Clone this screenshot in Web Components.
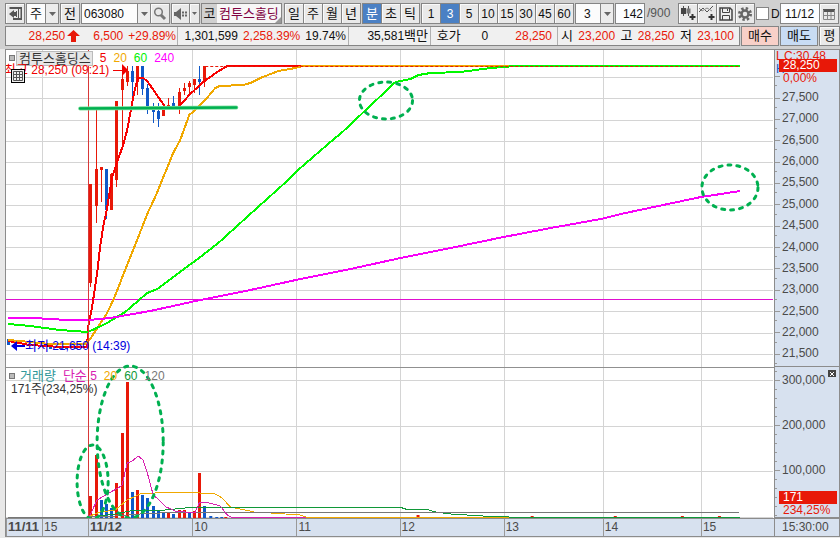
<!DOCTYPE html>
<html lang="ko">
<head>
<meta charset="utf-8">
<title>컴투스홀딩스 063080</title>
<style>
html,body{margin:0;height:100%}
body{font:12px/16px "Liberation Sans","Noto Sans CJK KR",sans-serif;color:#111;background:#e8e8e8}
</style>
</head>
<body>
<hts-window></hts-window>
<script>
const define=(name,html,setup)=>{
  const t=document.createElement('template');t.innerHTML=html;
  customElements.define(name,class extends HTMLElement{
    constructor(){super();this.attachShadow({mode:'open'}).append(t.content.cloneNode(true))}
    connectedCallback(){if(setup)setup(this,this.shadowRoot)}
  });
};
const hangul=/[가-힣]/;

define('hts-button',`<style>
:host{display:flex;width:20px;flex:none}
button{flex:1;min-width:0;padding:0;margin:0;border:0;background:#e9e9e9;font:inherit;color:inherit;display:flex;align-items:center;justify-content:center;box-shadow:inset 1px 1px #fafafa}
:host([active]) button{background:#4a80c4;color:#fff;box-shadow:none}
</style><button type="button"><slot></slot></button>`,(h,r)=>{
  const b=r.querySelector('button');
  if(h.getAttribute('label'))b.setAttribute('aria-label',h.getAttribute('label'));
  if(hangul.test(h.textContent))b.style.fontSize='13px';
});

define('hts-group',`<style>
:host{display:flex;flex:none;box-sizing:border-box;height:21px;border:1px solid #858585;background:#858585;gap:1px}
</style><slot></slot>`);

define('hts-select',`<style>
:host{display:grid;grid-template-columns:1fr 13px;gap:1px;flex:none;background:#858585;position:relative}
select{grid-column:1/3;grid-row:1;appearance:none;border:0;margin:0;padding:0 0 0 4px;background:#fcfcfc;font:inherit;color:#111;border-radius:0;min-width:0}
span{grid-column:2;grid-row:1;z-index:1;background:#ececec;border-left:1px solid #858585;pointer-events:none;display:flex;align-items:center;justify-content:center}
</style><select></select><span><svg width="7" height="4"><path d="M0 0H7L3.500 4Z" fill="#666"/></svg></span>`,(h,r)=>{
  const s=r.querySelector('select');s.setAttribute('aria-label',h.getAttribute('label'));
  s.add(new Option(h.getAttribute('value')));
  s.style.paddingLeft=h.getAttribute('pad')+'px';
  if(hangul.test(h.getAttribute('value')))s.style.fontSize='13px';
});

define('hts-input',`<style>
:host{display:flex;flex:none}
input{flex:1;width:0;min-width:0;border:0;margin:0;padding:0 2px 0 4px;background:#fcfdff;font:inherit;color:#111;border-radius:0;outline:0}
:host([end]) input{text-align:right;padding-right:1px}
</style><input type="text">`,(h,r)=>{
  const i=r.querySelector('input');i.value=h.getAttribute('value');i.setAttribute('aria-label',h.getAttribute('label'));
});

define('hts-toolbar',`<style>
:host{display:flex;align-items:center;padding:3px 1px 2px 5px;gap:1px;background:#d0d0d0}
.w18{width:18px}
.name{display:flex;background:#f7f7f7;width:79px;overflow:hidden;position:relative;color:#800040;white-space:nowrap;font-size:13px}
.name b{font-weight:400;background:#d0d0d0;color:#111;width:15px;text-align:center;line-height:19px;margin-right:2px}
.name span{line-height:19px}
.name i{position:absolute;right:0;bottom:0;border:3px solid;border-color:transparent #999 #999 transparent}
.total{color:#555;line-height:21px;width:32px;padding-left:1px}
label{display:flex;align-items:center;gap:2px;width:22px;margin-right:1px}
input{appearance:none;width:13px;height:13px;border:1px solid #858585;background:#fff;margin:0;flex:none}
</style>
<hts-group><hts-button class="w18" label="화면 이동"><svg width="13" height="13"><path d="M.5 1H12.500V12H4" stroke="#555" stroke-width="2" fill="none"/><path d="M9.500 2V12" stroke="#555"/><path d="M0 7L5 3V11ZM4 5H7V9H4ZM7 4H8V10H7Z" fill="#555"/></svg></hts-button></hts-group>
<hts-group><hts-select label="종류" value="주" pad="3" style="width:31px"></hts-select></hts-group>
<hts-group><hts-button class="w18">전</hts-button></hts-group>
<hts-group><hts-select label="종목코드" value="063080" pad="2" style="width:68px"></hts-select><hts-button class="w18" label="종목 검색"><svg width="14" height="14"><circle cx="5.500" cy="5" r="3.800" fill="none" stroke="#777" stroke-width="1.500"/><path d="M8 8L12 12" stroke="#777" stroke-width="3"/></svg></hts-button></hts-group>
<hts-group><hts-button style="width:17px" label="소리"><svg width="13" height="12"><path d="M0 4H2L7 0V12L2 8H0Z" fill="#666"/><path d="M8 4.500H10M11 4.500H13M8 7.500H10M11 7.500H13" stroke="#666" stroke-width="2"/></svg></hts-button><hts-button style="width:9px" label="소리 메뉴"><svg width="5" height="3"><path d="M0 0H5L2.500 3Z" fill="#666"/></svg></hts-button></hts-group>
<hts-group><div class="name"><b>코</b><span>컴투스홀딩</span><i></i></div></hts-group>
<hts-group style="margin-left:1px"><hts-button class="w18">일</hts-button><hts-button class="w18">주</hts-button><hts-button class="w18">월</hts-button><hts-button class="w18">년</hts-button></hts-group>
<hts-group><hts-button class="w18" active>분</hts-button><hts-button class="w18">초</hts-button><hts-button class="w18">틱</hts-button></hts-group>
<hts-group class="minutes"></hts-group>
<hts-group><hts-select label="분 단위" value="3" pad="8" style="width:37px"></hts-select></hts-group>
<hts-group><hts-input end label="봉 개수" value="142" style="width:28px"></hts-input></hts-group>
<span class="total">/900</span>
<hts-group><hts-button class="w18" label="봉 추가"><svg width="16" height="15"><path d="M3.500 0V10M8.500 0V10" stroke="#555"/><path d="M1 2H6V8H1Z" fill="#444"/><path d="M6.500 2.500H10.500V7.500H6.500Z" fill="#777"/><path d="M12.500 8V14M9.500 11H15.500" stroke="#333" stroke-width="2"/></svg></hts-button><hts-button class="w18" label="지표 추가"><svg width="16" height="15"><path d="M0 6L4 2L8 6L14 0" fill="none" stroke="#555"/><path d="M0 2L3 5L8 2L13 5" fill="none" stroke="#888"/><path d="M12.500 8V14M9.500 11H15.500" stroke="#333" stroke-width="2"/></svg></hts-button><hts-button class="w18" label="저장"><svg width="14" height="14"><path d="M1 1H11L13 3V13H1Z" fill="#eee" stroke="#444" stroke-width="1.500"/><path d="M3.500 1V5.500H10.500V1M3.500 13V8.500H10.500V13M8.500 2V4" fill="none" stroke="#444"/></svg></hts-button><hts-button class="w18" label="설정"><svg width="14" height="14"><circle cx="7" cy="7" r="5.500" fill="none" stroke="#666" stroke-width="3" stroke-dasharray="2.300 2.020"/><circle cx="7" cy="7" r="3.500" fill="none" stroke="#666" stroke-width="2.500"/></svg></hts-button></hts-group>
<label><input type="checkbox">D</label>
<hts-group><hts-input label="날짜" value="11/12" style="width:38px"></hts-input><hts-button class="w18" label="달력"><svg width="12" height="12"><path d="M0 1H12V4H0Z" fill="#555"/><path d="M.5 2V11.500H11.500V2M.5 7.500H11.500M4.500 4V11M8 4V11" fill="none" stroke="#888"/></svg></hts-button></hts-group>`,(h,r)=>{
  const g=r.querySelector('.minutes');
  for(const m of [1,3,5,10,15,30,45,60]){const b=document.createElement('hts-button');b.style.width='18px';b.textContent=m;if(m===3)b.setAttribute('active','');g.append(b)}
});

define('hts-quotes',`<style>
:host{display:flex;gap:1px;padding:0 0 3px 5px;background:#d0d0d0;height:20px}
dl{margin:0;flex:1;display:flex;border:1px solid #858585;background:#f0f0f0;line-height:18px;white-space:nowrap}
dl>div{display:flex;justify-content:flex-end;box-sizing:border-box;border-right:1px solid #b0b0b0;padding-right:2px;gap:5px}
dl>div:last-child{border:0;flex:1;justify-content:space-between;padding:0 5px 0 3px;gap:4px}
dt,dd{margin:0}.r{color:#e81808}
dt,.k{font-size:13px}
svg{align-self:center;margin:0 8px 0 -3px}
hts-group{height:20px}
</style>
<dl>
<div style="width:172px;padding-right:1px"><dd class="r">28,250</dd><svg width="13" height="12"><path d="M6.500 0L13 6H9V12H4V6H0Z" fill="#e81808"/></svg><dd class="r">6,500</dd><dd class="r">+29.89%</dd></div>
<div style="width:171px"><dd>1,301,599</dd><dd class="r">2,258.39%</dd><dd>19.74%</dd></div>
<div style="width:82px"><dd>35,581<span class="k">백만</span></dd></div>
<div style="width:127px;padding-right:5px"><dt>호가</dt><dd style="margin-left:16px">0</dd><dd class="r" style="margin-left:22px">28,250</dd></div>
<div><dt>시</dt><dd class="r">23,200</dd><dt>고</dt><dd class="r">28,250</dd><dt>저</dt><dd class="r">23,100</dd></div>
</dl>
<hts-group><hts-button id="buy" style="width:36px">매수</hts-button></hts-group><hts-group><hts-button id="sell" style="width:36px">매도</hts-button></hts-group><hts-group><hts-button style="width:19px">평</hts-button></hts-group>
`,(h,r)=>{
  for(const [id,c] of [['buy','#f8d0c8'],['sell','#c8dcf4']]){
    const b=r.getElementById(id).shadowRoot.querySelector('button');b.style.background=c;b.style.boxShadow='none';
  }
});

define('price-axis',`<style>
:host{display:flex;flex-direction:column;padding:15px 0 2px;background:#d7e1ef;border-left:1px solid #8c8c8c;border-right:1px solid #8c8c8c;border-bottom:1px solid #8c8c8c;color:#4a4a4a;position:relative;overflow:hidden}
.t{flex:1;display:grid;grid-template-columns:5px 1fr;align-items:center;gap:2px;background:linear-gradient(#999,#999) 0 100%/2px 1px no-repeat}
.t::before{content:"";height:1px;width:5px;background:#999;margin-top:2px}
.m{position:absolute;left:1px;color:#e81808;line-height:12px;white-space:nowrap}
.tag{left:4px;right:2px;background:#e81808;color:#fff;padding-left:4px}
</style><div class="m" style="top:0">L</div><div class="m" style="top:0;left:9px">C:30.48</div><div class="m" style="top:13px;color:#1058c8">H</div><div class="m" style="top:22px;left:8px">0,00%</div><div class="m tag" style="top:9px;line-height:13px">28,250</div>`,(h,r)=>{
  for(let v=28000;v>=21500;v-=500){const d=document.createElement('div');d.className='t';d.textContent=v===28000?'':v.toLocaleString('en-US');r.append(d)}
});

define('volume-axis',`<style>
:host{display:flex;flex-direction:column;justify-content:space-between;padding:5px 0 39px;background:repeating-linear-gradient(#999 0 1px,transparent 1px 9px) 0 4px/2px 100% no-repeat #d7e1ef;border-left:1px solid #8c8c8c;border-right:1px solid #8c8c8c;border-bottom:1px solid #8c8c8c;color:#4a4a4a;position:relative}
.t{display:grid;grid-template-columns:5px 1fr;align-items:center;gap:2px}
.t::before{content:"";width:5px;height:1px;background:#999;margin-top:1px}
button{position:absolute;right:3px;top:3px;width:8px;height:7px;padding:0;border:0;background:#444;display:flex;align-items:center;justify-content:center}
.foot{position:absolute;left:4px;right:2px;bottom:0;line-height:13px;color:#e81808}
.foot div{padding-left:4px}.foot div:first-child{background:#e81808;color:#fff}
</style><div class="t">300,000</div><div class="t">200,000</div><div class="t">100,000</div><div class="foot"><div>171</div><div>234,25%</div></div><button type="button" aria-label="닫기"><svg width="4" height="4"><path d="M0 0L4 4M4 0L0 4" stroke="#fff"/></svg></button>`);

define('time-axis',`<style>
:host{display:grid;grid-template-columns:36fr 46fr 104fr 104fr 103fr 104fr 99fr 98fr 73fr;background:#d7e1ef;border:1px solid #8c8c8c;border-width:1px 0;color:#4a4a4a}
span{border-left:1px solid #999;padding-left:1px;white-space:nowrap}
span:first-child{border:0}
b{font-size:13px}
</style><span><b>11/11</b></span><span>15</span><span><b>11/12</b></span><span>10</span><span>11</span><span>12</span><span>13</span><span>14</span><span>15</span>`);

define('chart-plot',`<style>
:host{display:block;position:relative;background:#fff;overflow:hidden;min-height:0}
svg.p{position:absolute;inset:0;width:100%;height:100%}
svg.p *{vector-effect:non-scaling-stroke}
.o{position:absolute;white-space:nowrap;display:flex;align-items:center}
.k{font-size:13px}
.sq{width:4px;height:4px;border:1px solid #777;background:#bbb;flex:none}
.chip{background:#e6e6e6;border:1px solid #bbb;font-size:13px;line-height:13px;padding:0 1px 0 2px;margin:0 7px 0 1px;color:#333}
.lg{display:flex;gap:7px}
.grid{left:5px;top:19px;width:12px;height:12px;border:1px solid #000;background:#eee;justify-content:center}
</style>
<svg class="p" viewBox="6 50 767 468" preserveAspectRatio="none" fill="none"></svg>
<div class="o" style="left:3px;top:0"><span class="sq"></span><span class="chip">컴투스홀딩스</span><span class="lg"><span style="color:#f00000">5</span><span style="color:#f0a800">20</span><span style="color:#00f000">60</span><span style="color:#f0f">240</span></span></div>
<div class="o" style="left:-2px;top:12px;color:#f00000"><span><span class="k">최고</span>&nbsp;28,250&nbsp;(09:21)</span><svg width="16" height="12" style="margin-left:4px"><path d="M0 6.500H10" stroke="#f00000"/><path d="M9 0L15 6L9 12Z" fill="#f00000"/></svg></div>
<div class="o grid"><svg width="10" height="10"><path d="M.5 .5H9.500V9.500H.5ZM3.500 0V10M6.500 0V10M0 3.500H10M0 6.500H10" stroke="#555" fill="none"/></svg></div>
<div class="o" style="left:5px;top:61.500%;color:#0000e0"><svg width="14" height="12"><path d="M0 6L6 1V11Z" fill="#0000e0"/><path d="M5 6H14" stroke="#0000e0" stroke-width="2"/></svg><span><span class="k">최저</span>&nbsp;21,650&nbsp;(14:39)</span></div>
<div class="o" style="left:3px;top:68%;gap:7px"><span class="sq" style="margin-right:-2px"></span><span class="k" style="color:#30989a">거래량</span><span style="color:#d820b0"><span class="k">단순</span>&nbsp;5</span><span style="color:#f0a800">20</span><span style="color:#109838">60</span><span style="color:#777">120</span></div>
<div class="o" style="left:5px;top:70.700%;color:#333">171주(234,25%)</div>`,(h,r)=>{
  const R='#e81808',B='#1058c8';let s='';
  const line=(pts,c,w)=>s+=`<polyline points="${pts}" stroke="${c}" stroke-width="${w}" shape-rendering="crispEdges"/>`;
  for(const y of [77.5,98.5,120.5,141.5,162.5,184.5,205.5,226.5,247.5,269.5,290.5,311.5,333.5,354.5,380.5,426.5,471.5,517.5])line(`6,${y} 772,${y}`,'#d4d4d4',1);
  for(const x of [42.5,192.5,296.5,399.5,503.5,602.5,700.5])line(`${x},50 ${x},518`,'#d4d4d4',1);
  line('6,367.5 773,367.5','#909090',1);
  line('6,299.5 772,299.5','#e010d0',1);
  // [x, wick top, wick bottom, body top, body bottom, colour, volume top, volume colour]
  const candles=[[90.5,184,287,184,283,R,496],[96.5,107,223,169,206,R,455],[101.5,167,202,167,170,R,500,B],[106.5,169,219,169,210,B,504],[111.5,173,210,174,210,R,508,B],[116.5,101,187,101,180,R,483],[122.5,73,146,79,90,R,433],[127.5,66,86,71,82,R,382],[132.5,66,106,71,82,B,492],[137.5,66,95,66,82,R,490],[142.5,66,95,66,89,B,495],[147.5,84,114,88,106,B,498],[153.5,103,123,108,112,B,506],[158.5,103,127,111,119,B,511],[163.5,103,116,108,116,R,513,B],[168.5,98,107,105,107,R,512],[173.5,96,106,103,106,B,514],[179.5,88,114,92,106,R,510],[184.5,83,95,88,91,R,510],[189.5,81,93,83,87,R,512,B],[194.5,79,93,79,85,R,511],[199.5,66,95,79,82,B,473,R],[204.5,66,87,66,81,R,506,B]];
  for(const [x,a,b,c,d,k,v,vk] of candles)s+=`<path shape-rendering="crispEdges" d="M${x-.5} ${a}h1V${b}h-1ZM${x-1.5} ${c}h3V${d}h-3Z" fill="${k}"/><path shape-rendering="crispEdges" d="M${x-1.5} ${v}h3V518h-3Z" fill="${vk||k}"/>`;
  for(const [x,y,k] of [[210,516,B],[216,517,B],[221,517,B],[225,517,R],[417,515,R],[531,516,R],[614,516,R],[681,516,R],[718,516,R]])s+=`<path d="M${x-1} ${y}h3V518h-3Z" fill="${k}"/>`;
  s+=`<path d="M7 339h3v6h-3ZM49 346h3v3h-3ZM59 346h3v3h-3ZM65 346h3v3h-3ZM74 346h3v3h-3Z" fill="${B}"/>`;
  line('8,341 30,345 60,347 87,347 88,327 92,307 97,273 100,247 103,227 107,208 109,195 112,177 117,162 123,145 127,130 131,108 135,88 138,78 143,78 147,81 165,107 178,107 190,94 203,82 217,72 227,66 303,66','#f80000',2);
  line('8,340 30,342 50,344 85,344 90,339 107,313 114,298 125,270 137,240 147,214 155,197 173,153 180,140 189,115 194,111 205,100 215,88 219,86 243,85 250,83 260,78 278,71 290,69 303,66 515,66','#f0a800',2);
  line('8,324 30,326 60,330 88,332 107,323 125,312 147,293 157,289 200,257 218,243 250,214 290,178 300,168 330,142 342,132 395,82 410,79 418,75 430,73 460,72 490,68 515,66 739,66','#00f800',2);
  line('8,318 33,318 67,320 88,320 110,318 150,311 200,300 250,290 300,279 350,269 400,258 450,248 503,237 550,228 600,219 620,214 700,197 720,194 739,191','#f800f8',2);
  s+='<path d="M205 66.500H739" stroke="#e81808" stroke-dasharray="3 2"/>';
  line('90,516 100,512 115,510 127,500 140,494 155,493 183,492 200,493 215,494 222,498 230,507 240,509 254,512 270,513 285,514 300,515 306,517 508,517','#f0a800',1);
  line('90,517 115,514 130,511 165,510 185,508 210,507 399,507 405,509 425,509 435,512 450,514 482,516 508,517 739,517','#109838',1);
  line('8,517 90,517 115,516 140,514 180,512 716,512 738,513','#777',1);
  line('89,517 97,500 107,494 118,488 122,485 127,463 132,461 138,456 143,460 148,476 153,495 160,501 166,507 175,511 185,512 195,512 199,503 205,502 213,504 220,506 227,515 231,517 306,517','#d820b0',1);
  line('88.500,50 88.500,518','#d83838',1);
  s+='<path d="M80 108.500L236 107.500" stroke="#80e0a0" stroke-width="4" stroke-linecap="round"/><path d="M80 108.500L236 107.500" stroke="#00b050" stroke-width="2.500" stroke-linecap="round"/>';
  for(const [x,y,a,b] of [[385.5,100.5,26.5,18.5],[729,187.5,28,22.5],[92.5,482,15.5,37],[130,442,33,76]])s+=`<ellipse cx="${x}" cy="${y}" rx="${a}" ry="${b}" stroke="#00b050" stroke-width="3" stroke-linecap="round" stroke-dasharray="3 6"/>`;
  r.querySelector('.p').innerHTML=s;
});

define('hts-chart',`<style>
:host{display:grid;grid-template-columns:minmax(0,1fr) 66px;grid-template-rows:minmax(0,317fr) minmax(0,151fr) 19px;margin-left:5px;border:1px solid #8c8c8c;border-width:1px 0 0 1px;box-sizing:border-box}
chart-plot{grid-row:1/3;grid-column:1}
.now{background:#d7e1ef;border:1px solid #8c8c8c;color:#4a4a4a;padding-left:7px;line-height:16px}
</style><chart-plot></chart-plot><price-axis></price-axis><volume-axis></volume-axis><time-axis></time-axis><div class="now">15:30:00</div>`);

define('hts-window',`<style>
:host{display:flex;flex-direction:column;min-height:100vh;box-sizing:border-box;padding-bottom:1px}
hts-chart{flex:1}
</style><hts-toolbar></hts-toolbar><hts-quotes></hts-quotes><hts-chart></hts-chart>`);
</script>
</body>
</html>
